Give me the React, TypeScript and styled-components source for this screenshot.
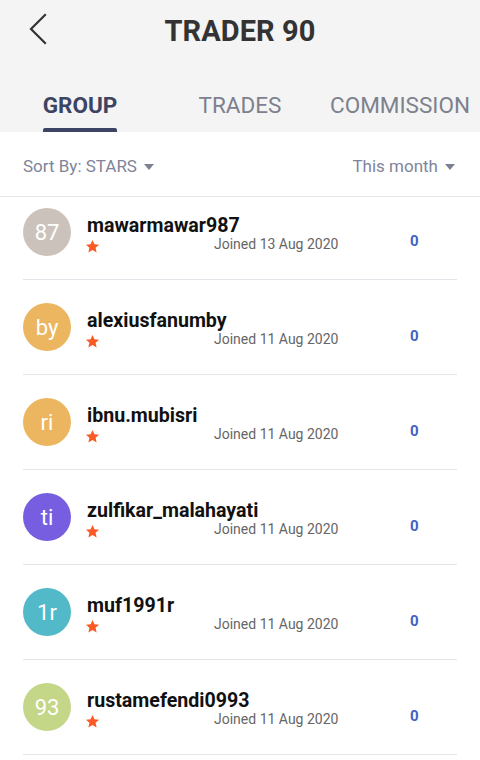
import { createGlobalStyle, styled } from "styled-components";

const GlobalStyle = createGlobalStyle`
  html, body {
    margin: 0;
    padding: 0;
    background: #ffffff;
  }
  body {
    font-family: Roboto, "Liberation Sans", Arial, sans-serif;
    -webkit-font-smoothing: antialiased;
  }
  * {
    box-sizing: border-box;
  }
`;

const Screen = styled.div`
  width: 480px;
  height: 760px;
  display: flex;
  flex-direction: column;
  overflow: hidden;
  background: #ffffff;
`;

const Header = styled.header`
  background: #f4f4f4;
`;

const TopBar = styled.div`
  height: 62px;
  display: grid;
  grid-template-columns: 62px 1fr 62px;
  align-items: center;
`;

const BackButton = styled.button`
  width: 62px;
  height: 62px;
  padding: 0 0 0 29px;
  border: none;
  background: transparent;
  display: flex;
  align-items: center;
  justify-content: flex-start;
  cursor: pointer;
  svg {
    display: block;
    margin-top: -4px;
  }
`;

const Title = styled.h1`
  margin: 0;
  text-align: center;
  font-size: 29px;
  line-height: 62px;
  font-weight: 700;
  color: #333333;
  letter-spacing: 0.1px;
`;

const Tabs = styled.nav`
  height: 70px;
  display: grid;
  grid-template-columns: repeat(3, 1fr);
`;

const Tab = styled.div<{ $active?: boolean }>`
  display: flex;
  justify-content: center;
  padding-top: 30px;
  span {
    position: relative;
    display: inline-block;
    font-size: 22.5px;
    line-height: 26px;
    padding-bottom: 14px;
    font-weight: ${(p) => (p.$active ? 700 : 400)};
    color: ${(p) => (p.$active ? "#3d4463" : "#7d808d")};
    white-space: nowrap;
  }
  span::after {
    content: "";
    position: absolute;
    left: 0;
    right: 0;
    bottom: 0;
    height: 4px;
    border-radius: 2px 2px 0 0;
    background: ${(p) => (p.$active ? "#3d4463" : "transparent")};
  }
`;

const SortBar = styled.div`
  height: 65px;
  padding: 4px 25px 0 23px;
  display: flex;
  align-items: center;
  justify-content: space-between;
  border-bottom: 1px solid #e6e6ec;
`;

const Dropdown = styled.button`
  display: flex;
  align-items: center;
  gap: 7px;
  padding: 0;
  border: none;
  background: transparent;
  font-family: inherit;
  font-size: 17px;
  color: #80849a;
  cursor: pointer;
  svg {
    display: block;
    margin-top: 1px;
  }
`;

const Viewport = styled.div`
  flex: 1;
  overflow: hidden;
`;

const List = styled.ul`
  list-style: none;
  margin: -12px 0 0;
  padding: 0 23px;
`;

const Row = styled.li`
  height: 95px;
  padding-top: 5px;
  border-bottom: 1px solid #e4e4ea;
  display: grid;
  grid-template-columns: 64px 127px 196px 1fr;
  grid-template-rows: 22px 18px;
  align-content: center;
`;

const Avatar = styled.div<{ $bg: string }>`
  grid-row: 1 / span 2;
  grid-column: 1;
  align-self: center;
  margin-top: -5px;
  width: 48px;
  height: 48px;
  border-radius: 50%;
  background: ${(p) => p.$bg};
  color: #ffffff;
  font-size: 22px;
  display: flex;
  align-items: center;
  justify-content: center;
`;

const Name = styled.div`
  grid-row: 1;
  grid-column: 2 / span 3;
  font-size: 19.6px;
  line-height: 22px;
  font-weight: 700;
  color: #111111;
  white-space: nowrap;
`;

const Star = styled.div`
  grid-row: 2;
  grid-column: 2;
  margin: 2px 0 0 -2px;
  svg {
    display: block;
  }
`;

const Joined = styled.div`
  grid-row: 2;
  grid-column: 3;
  margin-top: -2px;
  font-size: 14px;
  line-height: 18px;
  color: #666666;
  white-space: nowrap;
`;

const Count = styled.div`
  grid-row: 2;
  grid-column: 4;
  margin-top: -5px;
  font-size: 15px;
  line-height: 18px;
  font-weight: 700;
  color: #4262c4;
`;

const Caret = () => (
  <svg width="10" height="6" viewBox="0 0 10 6">
    <path d="M0 0h10L5 6z" fill="#7d8090" />
  </svg>
);

const StarIcon = () => (
  <svg width="15" height="15" viewBox="0 0 24 24">
    <path
      d="M12 1.5l3.1 6.9 7.4.7-5.6 5 1.7 7.4L12 17.6l-6.6 3.9 1.7-7.4-5.6-5 7.4-.7z"
      fill="#fa5a24"
    />
  </svg>
);

const members = [
  { initials: "87", color: "#cbc3bb", name: "mawarmawar987", joined: "Joined 13 Aug 2020" },
  { initials: "by", color: "#ecb660", name: "alexiusfanumby", joined: "Joined 11 Aug 2020" },
  { initials: "ri", color: "#ecb660", name: "ibnu.mubisri", joined: "Joined 11 Aug 2020" },
  { initials: "ti", color: "#775de0", name: "zulfikar_malahayati", joined: "Joined 11 Aug 2020" },
  { initials: "1r", color: "#52b9c8", name: "muf1991r", joined: "Joined 11 Aug 2020" },
  { initials: "93", color: "#c4d688", name: "rustamefendi0993", joined: "Joined 11 Aug 2020" },
];

export default function App() {
  return (
    <Screen>
      <GlobalStyle />
      <Header>
        <TopBar>
          <BackButton aria-label="Back">
            <svg width="20" height="32" viewBox="0 0 20 32">
              <path
                d="M16 2L2 16l14 14"
                fill="none"
                stroke="#333333"
                strokeWidth="2.2"
                strokeLinecap="square"
              />
            </svg>
          </BackButton>
          <Title>TRADER 90</Title>
          <div />
        </TopBar>
        <Tabs>
          <Tab $active>
            <span>GROUP</span>
          </Tab>
          <Tab>
            <span>TRADES</span>
          </Tab>
          <Tab>
            <span>COMMISSION</span>
          </Tab>
        </Tabs>
      </Header>
      <SortBar>
        <Dropdown>
          Sort By: STARS <Caret />
        </Dropdown>
        <Dropdown>
          This month <Caret />
        </Dropdown>
      </SortBar>
      <Viewport>
        <List>
          {members.map((m) => (
            <Row key={m.name}>
              <Avatar $bg={m.color}>{m.initials}</Avatar>
              <Name>{m.name}</Name>
              <Star>
                <StarIcon />
              </Star>
              <Joined>{m.joined}</Joined>
              <Count>0</Count>
            </Row>
          ))}
        </List>
      </Viewport>
    </Screen>
  );
}
